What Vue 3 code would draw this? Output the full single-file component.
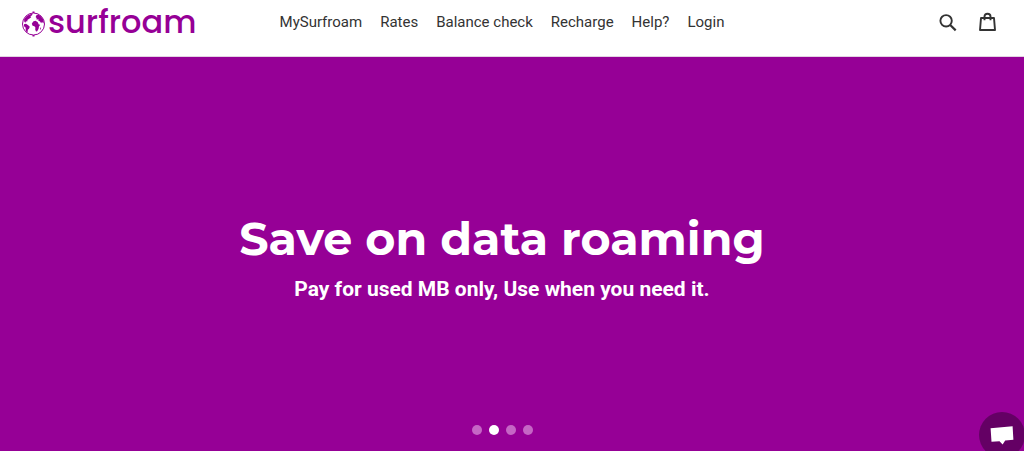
<script setup>
import { ref } from 'vue'

const links = ['MySurfroam', 'Rates', 'Balance check', 'Recharge', 'Help?', 'Login']
const slides = [1, 2, 3, 4]
const current = ref(2)
</script>

<template>
  <div class="page">
    <header class="header">
      <a class="logo" href="#" aria-label="surfroam home">
        <svg class="globe" viewBox="0 0 26 26" aria-hidden="true">
          <circle cx="13.5" cy="13" r="11" fill="none" stroke="currentColor" stroke-width="1" />
          <path fill="currentColor" d="M12.5.6h2V2h-2zM12.5 24h2v1.4h-2z" />
          <path
            fill="currentColor"
            d="M4 8.6 6.2 5.4l3.2-2 3.2-.6-.6 1.8-1.6.4.8 1.2-2 1.6-1.6 1-.4 1.6-1.4-.2.2 1.2-1.6-.4zM4 13.2l2-.4 2.2 1.4 1.6 1.6-.8 2-1.2 1-.2 2.2-.8.6-1-2.2-.2-2.8-1.6-1.4zM15.6 6l1-2 1.8-.4 2.2 1.4 2.4 3 .8 3-.6 1.4-1.2-1.6-.8 1.4-1.2-1.6-1.8-1 .4-1.4-1.4.4-1.4-.6 1.2-.6zM13.2 10.6l2.2-.8 2.2 1.2 1.2 2.4 1.4.4-1.2 1.8-.4 2.2-1.4 2.4-1.2.4-.8-2 .2-2.2-1-1.2-1.8-.4-.8-2zM20.4 16.6l.8.2-.6 1.8-.7.2z"
          />
        </svg>
        <span class="wordmark">surfroam</span>
      </a>
      <nav class="nav" aria-label="Main">
        <a v-for="link in links" :key="link" href="#">{{ link }}</a>
      </nav>
      <div class="tools">
        <button type="button" aria-label="Search">
          <svg viewBox="0 0 20 20" aria-hidden="true">
            <circle cx="8.1" cy="8.8" r="5.7" fill="none" stroke="currentColor" stroke-width="1.9" />
            <path d="m12.2 13 5.5 5.4" fill="none" stroke="currentColor" stroke-width="2.2" />
          </svg>
        </button>
        <button type="button" aria-label="Cart">
          <svg viewBox="0 0 20 20" aria-hidden="true">
            <path
              d="M3 6h13l1 12H2zM6.5 8.2V4.6q0-2.8 3-2.8t3 2.8v3.6"
              fill="none"
              stroke="currentColor"
              stroke-width="1.9"
              stroke-linejoin="round"
            />
          </svg>
        </button>
      </div>
    </header>

    <main class="hero">
      <h1>Save on data roaming</h1>
      <p>Pay for used MB only, Use when you need it.</p>
      <div class="dots">
        <button
          v-for="slide in slides"
          :key="slide"
          type="button"
          :class="{ active: slide === current }"
          :aria-label="`Slide ${slide}`"
          @click="current = slide"
        ></button>
      </div>
    </main>

    <button class="chat" type="button" aria-label="Open chat">
      <svg viewBox="0 0 46 46" aria-hidden="true">
        <path fill="#fff" d="m11.6 16.2 22-2 .8 13.6-8.2.8-2.6 3.8-3.1-3.2-8 .5z" />
      </svg>
    </button>
  </div>
</template>

<style>
body {
  margin: 0;
}
</style>

<style scoped>
.page {
  display: flex;
  flex-direction: column;
  min-height: 100vh;
  box-sizing: border-box;
  background: #fff;
  color: #333;
  font-family: Roboto, "Liberation Sans", sans-serif;
}
button {
  padding: 0;
  border: 0;
  background: none;
  color: inherit;
  cursor: pointer;
}
a {
  color: inherit;
  text-decoration: none;
}
.header {
  display: grid;
  grid-template-columns: 1fr auto 1fr;
  align-items: center;
  height: 44px;
  padding: 0 26px 12px 20px;
  border-bottom: 1px solid #e3d3e3;
}
.logo {
  display: flex;
  align-items: center;
  gap: 2px;
  color: #960096;
}
.globe {
  width: 26px;
  height: 26px;
  margin-top: 4px;
}
.wordmark {
  font-family: Poppins, Inter, "Liberation Sans", sans-serif;
  font-size: 32px;
  line-height: 44px;
  font-weight: 500;
}
.nav {
  display: flex;
  gap: 18px;
  margin-right: 14px;
  font-size: 15px;
  line-height: 20px;
  white-space: nowrap;
}
.tools {
  display: flex;
  justify-content: flex-end;
  gap: 20px;
}
.tools button,
.tools svg {
  display: block;
  width: 20px;
  height: 20px;
}
.hero {
  position: relative;
  display: flex;
  flex: 1;
  flex-direction: column;
  align-items: center;
  justify-content: center;
  padding: 6px 20px 0 0;
  background: #960096;
  color: #fff;
  text-align: center;
}
h1 {
  margin: 0;
  font-family: Montserrat, Inter, "Open Sans", sans-serif;
  font-size: 46px;
  line-height: 60px;
  font-weight: 700;
}
p {
  margin: 4px 0 0;
  font-size: 21px;
  line-height: 32px;
  font-weight: 700;
}
.dots {
  position: absolute;
  bottom: 16px;
  left: 0;
  right: 20px;
  display: flex;
  justify-content: center;
  gap: 7px;
}
.dots button {
  width: 10px;
  height: 10px;
  border-radius: 50%;
  background: #c566c5;
}
.dots .active {
  background: #fff;
}
.chat {
  position: fixed;
  right: -1px;
  bottom: -7px;
  width: 46px;
  height: 46px;
  border-radius: 50%;
  background: #640064;
}
.chat svg {
  display: block;
}
</style>
